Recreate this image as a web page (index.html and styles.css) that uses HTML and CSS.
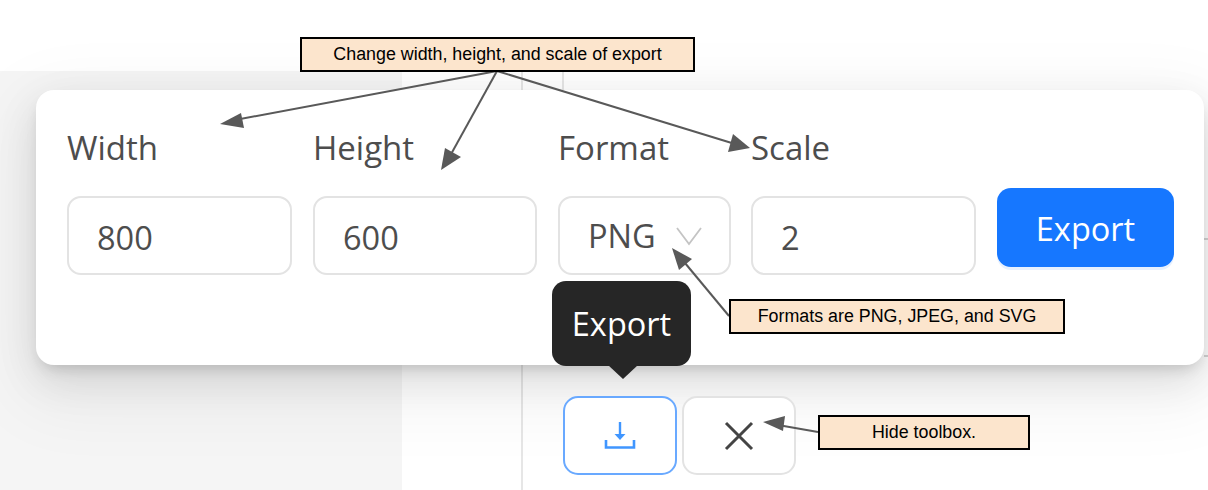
FILE: index.html
```html
<!DOCTYPE html>
<html lang="en">
<head>
    <meta charset="UTF-8">
    <title>Export toolbox</title>
    <link rel="stylesheet" href="styles.css">
</head>
<body>
    <div class="stage">
        <div class="app">
            <div class="side"></div>
            <div class="middle"></div>
            <div class="main"><div class="main-rule"></div></div>
        </div>

        <div class="content">
            <div class="card">
                <form class="form">
                    <div class="field wide">
                        <label class="label">Width</label>
                        <div class="box">800</div>
                    </div>
                    <div class="field mid">
                        <label class="label">Height</label>
                        <div class="box">600</div>
                    </div>
                    <div class="field narrow">
                        <label class="label">Format</label>
                        <div class="box select">
                            <span>PNG</span>
                            <svg class="chevron" width="28" height="20" viewBox="0 0 28 20"><path d="M2 2 14 18 26 2" fill="none" stroke="#c4c4c4" stroke-width="1.800"/></svg>
                        </div>
                    </div>
                    <div class="field wide">
                        <label class="label">Scale</label>
                        <div class="box">2</div>
                    </div>
                    <button type="button" class="export-btn">Export</button>
                </form>
            </div>

            <div class="toolbox">
                <div class="tool active">
                    <svg width="32" height="30" viewBox="0 0 32 30"><path d="M16 1v13" fill="none" stroke="#4096ff" stroke-width="2.400"/><path d="M10.500 13h11L16 19z" fill="#4096ff"/><path d="M2 19v7.500h28V19" fill="none" stroke="#4096ff" stroke-width="2.600"/></svg>
                </div>
                <div class="tool">
                    <svg width="32" height="32" viewBox="0 0 32 32"><path d="M3 3l26 26M29 3 3 29" fill="none" stroke="#444" stroke-width="3"/></svg>
                </div>
            </div>
        </div>

        <div class="tooltip">Export</div>

        <svg class="arrows" width="1208" height="490" viewBox="0 0 1208 490">
            <g stroke="#595959" stroke-width="2" fill="none">
                <line x1="497" y1="71" x2="235" y2="120"/>
                <line x1="497" y1="71" x2="450" y2="156"/>
                <line x1="497" y1="71" x2="735" y2="144"/>
                <line x1="729" y1="316" x2="680" y2="257"/>
                <line x1="818" y1="432" x2="778" y2="425"/>
            </g>
            <g fill="#595959">
                <polygon points="220,124 241,113 244,128"/>
                <polygon points="441,170 445,148 461,157"/>
                <polygon points="750,148 728,152 733,134"/>
                <polygon points="672,248 692,259 679,270"/>
                <polygon points="763,422 785,416 783,431"/>
            </g>
        </svg>

        <div class="note note-top">Change width, height, and scale of export</div>
        <div class="note note-format">Formats are PNG, JPEG, and SVG</div>
        <div class="note note-hide">Hide toolbox.</div>
    </div>
</body>
</html>
```

FILE: styles.css
```css
* {
    box-sizing: border-box;
}

body {
    margin: 0;
    background-color: #fff;
}

.stage {
    position: relative;
    width: 1208px;
    height: 490px;
    overflow: hidden;
    font-family: "Open Sans", "Noto Sans", sans-serif;
    color: #4d4d4d;
}

/* the faded app behind the panel */
.app {
    position: absolute;
    top: 71px;
    left: 0;
    right: 0;
    bottom: 0;
    display: flex;
}

.side {
    width: 402px;
    background-color: #f5f5f5;
}

.middle {
    width: 121px;
    border-right: 2px solid #e6e6e6;
    background-color: #fff;
}

/* the two short lines at the right edge are table rows peeking out */
.main {
    flex: 1;
    background-color: #fff;
    background-image: linear-gradient(#d4d4d4, #d4d4d4), linear-gradient(#d4d4d4, #d4d4d4);
    background-repeat: no-repeat;
    background-size: 4px 2px;
    background-position: right 0 top 167px, right 0 top 284px;
}

.main-rule {
    width: 2px;
    height: 20px;
    margin-left: 39px;
    background-color: #e6e6e6;
}

.content {
    position: relative;
    padding: 90px 4px 0 36px;
}

.card {
    height: 275px;
    padding: 31px 30px 0 31px;
    border-radius: 18px;
    background-color: #fff;
    box-shadow: 0 15px 40px rgba(0, 0, 0, 0.1), 0 8px 15px -6px rgba(0, 0, 0, 0.18), 0 22px 70px 20px rgba(0, 0, 0, 0.05);
}

.form {
    display: flex;
    gap: 21px;
}

.field.wide {
    width: 225px;
}

.field.mid {
    width: 224px;
}

.field.narrow {
    width: 173px;
    margin-right: -1px;
}

.label {
    display: block;
    height: 75px;
    font-size: 33px;
    line-height: 54px;
}

.box {
    display: flex;
    align-items: center;
    height: 79px;
    padding: 3px 28px 0;
    border: 2px solid #e3e3e3;
    border-radius: 14px;
    font-size: 32.500px;
    background-color: #fff;
}

.select {
    justify-content: space-between;
    padding-right: 26px;
    padding-top: 0;
}

.export-btn {
    width: 177px;
    height: 79px;
    margin-top: 67px;
    padding-top: 3px;
    border: none;
    border-radius: 14px;
    font-family: inherit;
    font-size: 32.500px;
    color: #fff;
    background-color: #1677ff;
    box-shadow: 0 3px 0 rgba(22, 119, 255, 0.1);
}

.toolbox {
    display: flex;
    gap: 5px;
    margin: 31px 0 0 527px;
}

.tool {
    display: flex;
    align-items: center;
    justify-content: center;
    width: 114px;
    height: 79px;
    border: 2px solid #e3e3e3;
    border-radius: 15px;
    background-color: #fff;
}

.tool.active {
    border-color: #69a9ff;
}

.tooltip {
    position: absolute;
    top: 281px;
    left: 552px;
    width: 139px;
    height: 85px;
    border-radius: 14px;
    font-size: 32.500px;
    line-height: 85px;
    text-align: center;
    color: #fff;
    background-color: #262626;
}

.tooltip::after {
    content: "";
    position: absolute;
    left: 56px;
    bottom: -13px;
    border-top: 14px solid #262626;
    border-left: 15px solid transparent;
    border-right: 15px solid transparent;
}

.arrows {
    position: absolute;
    top: 0;
    left: 0;
}

.note {
    position: absolute;
    height: 35px;
    border: 2px solid #000;
    font-family: "Liberation Sans", Arial, sans-serif;
    font-size: 17.850px;
    line-height: 30px;
    text-align: center;
    color: #000;
    background-color: #fce5cd;
}

.note-top {
    top: 37px;
    left: 300px;
    width: 395px;
}

.note-format {
    top: 299px;
    left: 729px;
    width: 336px;
}

.note-hide {
    top: 415px;
    left: 818px;
    width: 212px;
}
```
